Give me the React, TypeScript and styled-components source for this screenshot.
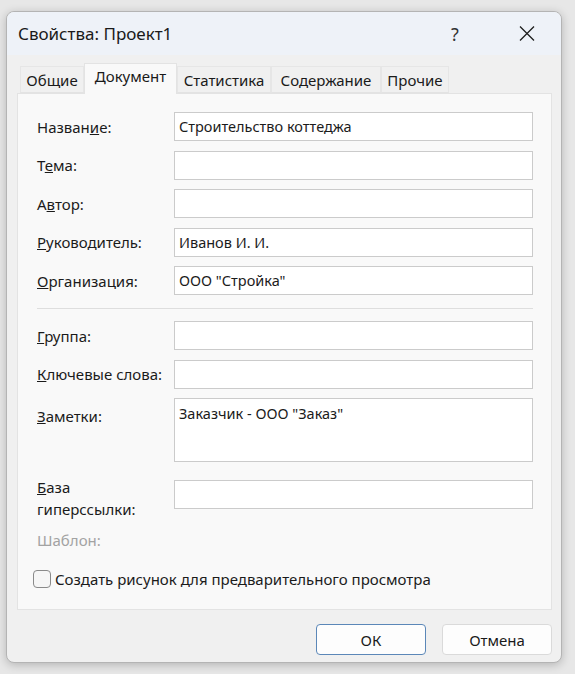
import styled, { createGlobalStyle } from "styled-components";

const GlobalStyle = createGlobalStyle`
  html, body {
    margin: 0;
    padding: 0;
    background: #e7e7e7;
  }
  body {
    font-family: "Noto Sans", "Open Sans", sans-serif;
    color: #1b1b1b;
  }
  * { box-sizing: border-box; }
`;

const fields = [
  { label: "Название:", key: 6, value: "Строительство коттеджа" },
  { label: "Тема:", key: 1, value: "" },
  { label: "Автор:", key: 1, value: "" },
  { label: "Руководитель:", key: 0, value: "Иванов И. И." },
  { label: "Организация:", key: 0, value: "ООО \"Стройка\"" },
];

const tabs = [
  { name: "Общие", width: 64 },
  { name: "Документ", width: 93 },
  { name: "Статистика", width: 94 },
  { name: "Содержание", width: 110 },
  { name: "Прочие", width: 68 },
];

function AccessLabel({ text, at }: { text: string; at: number }) {
  return (
    <>
      {text.slice(0, at)}
      <u>{text[at]}</u>
      {text.slice(at + 1)}
    </>
  );
}

function App() {
  return (
    <>
      <GlobalStyle />
      <Screen>
        <Window>
          <TitleBar>
            <Title>Свойства: Проект1</Title>
            <CaptionButton $gap={26}>?</CaptionButton>
            <CaptionButton>
              <svg width="16" height="15" viewBox="0 0 16 15">
                <path d="M1 0.5 L15 14.5 M15 0.5 L1 14.5" stroke="#1f1f1f" strokeWidth="1.3" fill="none" />
              </svg>
            </CaptionButton>
          </TitleBar>
          <Body>
            <TabRow>
              {tabs.map((t, i) => (
                <Tab key={t.name} $active={i === 1} $width={t.width}>{t.name}</Tab>
              ))}
            </TabRow>
            <Panel>
              <Form>
                {fields.map((f) => (
                  <Row key={f.label}>
                    <Label><AccessLabel text={f.label} at={f.key} /></Label>
                    <Input>{f.value}</Input>
                  </Row>
                ))}
                <Separator />
                <Row $space={12}>
                  <Label><AccessLabel text="Группа:" at={0} /></Label>
                  <Input />
                </Row>
                <Row>
                  <Label><AccessLabel text="Ключевые слова:" at={0} /></Label>
                  <Input />
                </Row>
                <Row $top>
                  <Label $pad={4}><AccessLabel text="Заметки:" at={0} /></Label>
                  <TextArea>Заказчик - ООО "Заказ"</TextArea>
                </Row>
                <Row $top $space={14}>
                  <TwoLineLabel>
                    <u>Б</u>аза<br />гиперссылки:
                  </TwoLineLabel>
                  <Input $offset={4} />
                </Row>
                <Muted>Шаблон:</Muted>
                <CheckRow>
                  <CheckBox />
                  Создать рисунок для предварительного просмотра
                </CheckRow>
              </Form>
            </Panel>
          </Body>
          <Footer>
            <Button $primary>ОК</Button>
            <Button>Отмена</Button>
          </Footer>
        </Window>
      </Screen>
    </>
  );
}

const Screen = styled.div`
  width: 575px;
  height: 674px;
  padding: 11px 0 0 6px;
`;

const Window = styled.div`
  width: 556px;
  height: 652px;
  border: 1px solid #b4b4b4;
  border-radius: 8px;
  overflow: hidden;
  background: #f0f0f0;
  box-shadow: 0 2px 10px rgba(0, 0, 0, 0.22);
  display: flex;
  flex-direction: column;
`;

const TitleBar = styled.div`
  height: 43px;
  flex-shrink: 0;
  background: #eef2f8;
  display: flex;
  align-items: center;
  padding: 0 11px 0 11px;
`;

const Title = styled.div`
  flex: 1;
  font-size: 17px;
  color: #1a1a1a;
`;

const CaptionButton = styled.div<{ $gap?: number }>`
  width: 46px;
  height: 32px;
  margin-right: ${(p) => p.$gap ?? 0}px;
  display: flex;
  align-items: center;
  justify-content: center;
  font-size: 18px;
  color: #333;
`;

const Body = styled.div`
  padding: 8px 9px 0 10px;
`;

const TabRow = styled.div`
  display: flex;
  align-items: flex-end;
  height: 30px;
  padding-left: 3px;
`;

const Tab = styled.div<{ $active?: boolean; $width: number }>`
  width: ${(p) => p.$width}px;
  height: ${(p) => (p.$active ? 31 : 27)}px;
  margin-bottom: ${(p) => (p.$active ? -1 : 0)}px;
  padding-top: ${(p) => (p.$active ? 2 : 3)}px;
  text-align: center;
  background: ${(p) => (p.$active ? "#f9f9f9" : "#f0f0f0")};
  border: 1px solid ${(p) => (p.$active ? "#e3e3e3" : "#e6e6e6")};
  border-bottom: ${(p) => (p.$active ? "none" : "1px solid #e3e3e3")};
  position: relative;
  z-index: ${(p) => (p.$active ? 1 : 0)};
  font-size: 15px;
  color: #1a1a1a;
  white-space: nowrap;
`;

const Panel = styled.div`
  height: 517px;
  background: #f9f9f9;
  border: 1px solid #e3e3e3;
  padding: 18px 18px 0 19px;
`;

const Form = styled.div`
  display: flex;
  flex-direction: column;
`;

const Row = styled.div<{ $top?: boolean; $space?: number }>`
  display: grid;
  grid-template-columns: 137px 1fr;
  align-items: ${(p) => (p.$top ? "start" : "center")};
  margin-top: ${(p) => p.$space ?? 9.5}px;
  &:first-child { margin-top: 0; }
`;

const Label = styled.div<{ $pad?: number }>`
  font-size: 15px;
  line-height: 28px;
  padding-top: ${(p) => p.$pad ?? 0}px;
  white-space: nowrap;
`;

const TwoLineLabel = styled.div`
  font-size: 15px;
  line-height: 22px;
`;

const Input = styled.div<{ $offset?: number }>`
  height: 29px;
  margin-top: ${(p) => p.$offset ?? 0}px;
  background: #fff;
  border: 1px solid #cbcbcb;
  padding: 0 4px;
  font-size: 14.5px;
  line-height: 27px;
  white-space: nowrap;
  overflow: hidden;
`;

const TextArea = styled.div`
  height: 64px;
  background: #fff;
  border: 1px solid #cbcbcb;
  padding: 3px 4px;
  font-size: 14.5px;
  line-height: 22px;
`;

const Separator = styled.div`
  height: 1px;
  background: #dedede;
  margin-top: 13px;
`;

const Muted = styled.div`
  margin-top: 9px;
  font-size: 15px;
  line-height: 22px;
  color: #a3a3a3;
`;

const CheckRow = styled.div`
  margin-top: 18px;
  margin-left: -4px;
  display: flex;
  align-items: center;
  gap: 4px;
  font-size: 15px;
  line-height: 20px;
`;

const CheckBox = styled.div`
  width: 18px;
  height: 18px;
  border: 1px solid #8a8a8a;
  border-radius: 4px;
  background: #f6f6f6;
`;

const Footer = styled.div`
  display: flex;
  justify-content: flex-end;
  gap: 16px;
  padding: 14px 9px 0 0;
`;

const Button = styled.div<{ $primary?: boolean }>`
  width: 110px;
  height: 31px;
  background: #fdfdfd;
  border: 1px solid ${(p) => (p.$primary ? "#5b87b8" : "#dadada")};
  border-radius: 4px;
  display: flex;
  align-items: center;
  justify-content: center;
  font-size: 15px;
  color: #1a1a1a;
`;

export default App;
